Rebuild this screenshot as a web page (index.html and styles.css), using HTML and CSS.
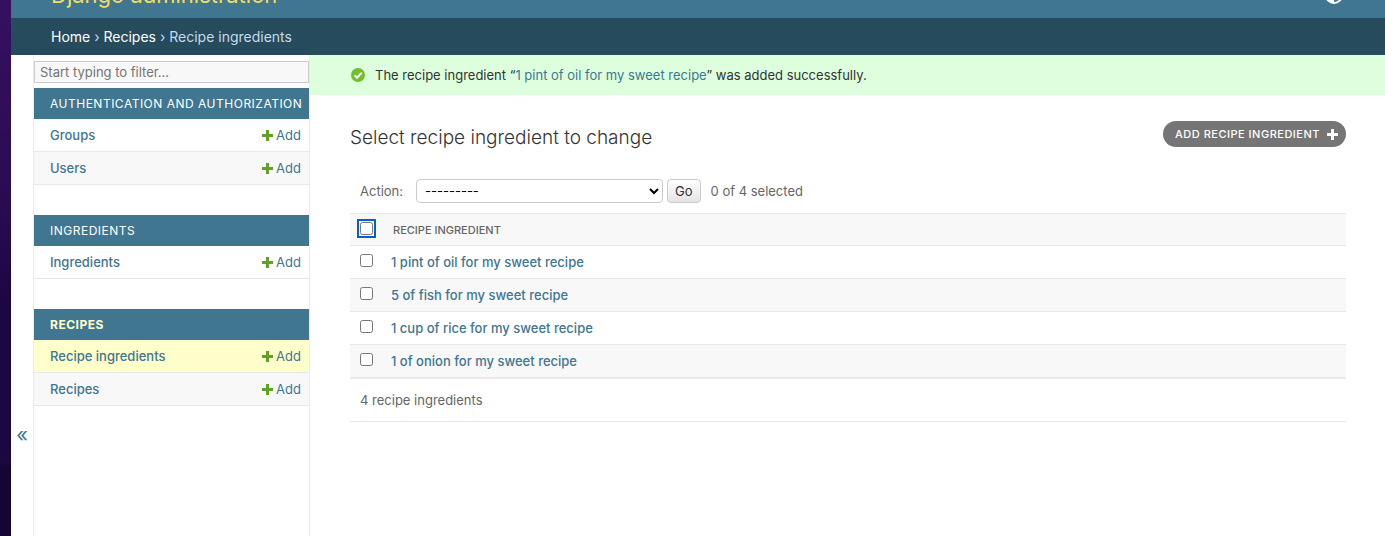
FILE: index.html
```html
<!DOCTYPE html>
<html lang="en">
<head>
<meta charset="utf-8">
<meta name="viewport" content="width=device-width, initial-scale=1">
<title>Select recipe ingredient to change | Django site admin</title>
<link rel="stylesheet" href="styles.css">
</head>
<body class="desktop">
<svg class="sprite" aria-hidden="true">
  <symbol id="plus" viewBox="0 0 11 11"><path d="M4 0h3v4h4v3H7v4H4V7H0V4h4z"/></symbol>
</svg>
<div class="window">
  <header class="header">
    <a class="site-name" href="#">Django administration</a>
    <button class="theme-toggle" type="button" aria-label="Toggle theme">
      <svg viewBox="0 0 20 20" width="20" height="20"><circle cx="10" cy="10" r="8" fill="none" stroke="#fff" stroke-width="2"/><path d="M10 2a8 8 0 0 0 0 16z" fill="#fff"/></svg>
    </button>
  </header>
  <nav class="breadcrumbs" aria-label="Breadcrumbs">
    <a href="#">Home</a> › <a href="#">Recipes</a> › Recipe ingredients
  </nav>
  <div class="main">
    <button class="sidebar-toggle" type="button" aria-label="Toggle navigation">«</button>
    <nav class="sidebar" aria-label="Sidebar">
      <input class="filter" type="search" placeholder="Start typing to filter…" aria-label="Filter navigation items">
      <section class="module">
        <h2 class="caption"><a href="#">Authentication and Authorization</a></h2>
        <div class="model"><a class="model-name" href="#">Groups</a><a class="add" href="#"><svg class="plus"><use href="#plus"/></svg>Add</a></div>
        <div class="model"><a class="model-name" href="#">Users</a><a class="add" href="#"><svg class="plus"><use href="#plus"/></svg>Add</a></div>
      </section>
      <section class="module">
        <h2 class="caption"><a href="#">Ingredients</a></h2>
        <div class="model"><a class="model-name" href="#">Ingredients</a><a class="add" href="#"><svg class="plus"><use href="#plus"/></svg>Add</a></div>
      </section>
      <section class="module">
        <h2 class="caption current"><a href="#">Recipes</a></h2>
        <div class="model current"><a class="model-name" href="#">Recipe ingredients</a><a class="add" href="#"><svg class="plus"><use href="#plus"/></svg>Add</a></div>
        <div class="model"><a class="model-name" href="#">Recipes</a><a class="add" href="#"><svg class="plus"><use href="#plus"/></svg>Add</a></div>
      </section>
    </nav>
    <main class="content">
      <div class="message" role="status">
        <svg class="tick" viewBox="0 0 14 14"><circle cx="7" cy="7" r="7" fill="#70bf2b"/><path d="M3.5 7.2l2.5 2.5 4.7-5" fill="none" stroke="#fff" stroke-width="2"/></svg>
        <span>The recipe ingredient “<a href="#">1 pint of oil for my sweet recipe</a>” was added successfully.</span>
      </div>
      <div class="page">
        <div class="title-row">
          <h1 class="title">Select recipe ingredient to change</h1>
          <a class="add-button" href="#">Add recipe ingredient<svg class="plus"><use href="#plus"/></svg></a>
        </div>
        <form class="changelist">
          <div class="actions">
            <label class="action-label" for="action">Action:</label>
            <select class="action-select" id="action"><option>---------</option><option>Delete selected recipe ingredients</option></select>
            <button class="go" type="button">Go</button>
            <span class="counter">0 of 4 selected</span>
          </div>
          <table class="results">
            <thead>
              <tr><th class="check"><input class="box focused" type="checkbox" aria-label="Select all"></th><th class="heading" scope="col">Recipe ingredient</th></tr>
            </thead>
            <tbody>
              <tr><td class="check"><input class="box" type="checkbox" aria-label="Select 1 pint of oil"></td><th class="name" scope="row"><a href="#">1 pint of oil for my sweet recipe</a></th></tr>
              <tr><td class="check"><input class="box" type="checkbox" aria-label="Select 5 of fish"></td><th class="name" scope="row"><a href="#">5 of fish for my sweet recipe</a></th></tr>
              <tr><td class="check"><input class="box" type="checkbox" aria-label="Select 1 cup of rice"></td><th class="name" scope="row"><a href="#">1 cup of rice for my sweet recipe</a></th></tr>
              <tr><td class="check"><input class="box" type="checkbox" aria-label="Select 1 of onion"></td><th class="name" scope="row"><a href="#">1 of onion for my sweet recipe</a></th></tr>
            </tbody>
          </table>
          <p class="paginator">4 recipe ingredients</p>
        </form>
      </div>
    </main>
  </div>
</div>
</body>
</html>
```
FILE: styles.css
```css
* { box-sizing: border-box; }

.desktop {
  margin: 0;
  min-height: 100vh;
  padding-left: 11px;
  display: flex;
  background: linear-gradient(#35105f 0, #2c0c55 180px, #1d0743 300px, #1d0743 460px, #140532 470px, #140532 100%);
  font-family: Inter, Roboto, "Liberation Sans", sans-serif;
  font-size: 13px;
  color: #333;
}
a { color: #417690; text-decoration: none; }
button { font-family: inherit; cursor: pointer; }
.sprite { position: absolute; width: 0; height: 0; }
.plus { width: 11px; height: 11px; fill: currentColor; flex: none; }

.window { flex: 1; min-width: 0; display: flex; flex-direction: column; background: #fff; }

.header {
  height: 18px;
  padding: 0 41px 0 40px;
  display: flex;
  align-items: flex-end;
  justify-content: space-between;
  overflow: hidden;
  background: #417690;
}
.site-name { padding-bottom: 9px; font-size: 22px; line-height: 28px; color: #f5dd5d; }
.theme-toggle { display: flex; margin-bottom: 13px; padding: 0; border: 0; background: none; }

.breadcrumbs { padding: 9px 40px 8px; font-size: 14px; line-height: 20px; background: #264b5d; color: #c4dce8; }
.breadcrumbs a { color: #fff; }

.main { flex: 1; display: flex; }
.sidebar-toggle {
  width: 22px;
  padding: 278px 0 0;
  border: 0;
  background: #fff;
  font-size: 20px;
  color: #417690;
}
.sidebar { width: 277px; flex: none; padding-top: 6px; border: solid #eaeaea; border-width: 0 1px; }
.filter {
  display: block;
  width: 100%;
  height: 22px;
  margin-bottom: 5px;
  padding: 0 5px;
  border: 1px solid #ccc;
  border-radius: 0;
  background: #f8f8f8;
  font: inherit;
  appearance: none;
}
.filter::placeholder { color: #757575; }

.module { margin-bottom: 30px; }
.caption {
  margin: 0;
  padding: 8px 0 8px 16px;
  background: #417690;
  font-size: 12px;
  font-weight: 400;
  line-height: 15px;
  letter-spacing: 0.5px;
  text-transform: uppercase;
  white-space: nowrap;
}
.caption a { color: #fff; }
.caption.current { font-weight: 700; }
.caption.current a { color: #ffc; }
.model {
  display: flex;
  justify-content: space-between;
  padding: 8px 8px 8px 16px;
  border-bottom: 1px solid #e8e8e8;
  line-height: 16px;
}
.model:nth-child(odd) { background: #f8f8f8; }
.model.current { background: #ffc; }
.model-name { font-weight: 500; }
.add { display: flex; align-items: center; gap: 3px; }
.add .plus { fill: #5fa225; }

.content { flex: 1; min-width: 0; }
.message { display: flex; align-items: center; gap: 10px; padding: 10px 41px; line-height: 20px; background: #dfd; }
.tick { width: 14px; height: 14px; flex: none; }
.page { padding: 26px 39px 40px 40px; }
.title-row { display: flex; justify-content: space-between; align-items: flex-start; }
.title { margin: 4px 0 0; font-size: 19px; font-weight: 300; line-height: 26px; }
.add-button {
  display: flex;
  align-items: center;
  gap: 7px;
  padding: 0 8px 0 12px;
  border-radius: 13px;
  background: #757575;
  color: #fff;
  font-size: 11px;
  font-weight: 500;
  line-height: 26px;
  letter-spacing: 0.5px;
  text-transform: uppercase;
}

.actions { display: flex; align-items: center; padding: 28px 10px 10px; line-height: 24px; color: #666; }
.action-label { margin-right: 13px; }
.action-select {
  width: 247px;
  height: 24px;
  margin-right: 4px;
  padding: 0 4px;
  border: 1px solid #ccc;
  border-radius: 4px;
  background: #fff;
  font: inherit;
  color: #000;
}
.go {
  height: 24px;
  margin-right: 10px;
  padding: 0 7px;
  border: 1px solid #ccc;
  border-radius: 4px;
  background: linear-gradient(#fff, #e4e4e4);
  font-size: 13px;
  color: #333;
}

.results { width: 100%; border-collapse: collapse; text-align: left; border-top: 1px solid #e8e8e8; }
.results td, .results th { height: 33px; padding: 0; border-bottom: 1px solid #e8e8e8; }
.results thead th { height: 32px; }
.results tbody tr:last-child > * { border-bottom: 2px solid #e8e8e8; }
.results thead, .results tbody tr:nth-child(even) { background: #f8f8f8; }
.results .check { width: 41px; padding: 8px 0 0 10px; vertical-align: top; }
.box { display: block; width: 13px; height: 13px; margin: 0; }
.focused { outline: 2px solid #0b5cc4; outline-offset: 1px; border-radius: 2px; }
.results .heading { padding-left: 2px; font-size: 11px; font-weight: 500; color: #666; text-transform: uppercase; }
.name { font-weight: 500; }
.paginator { margin: 0; padding: 10px; border-bottom: 1px solid #e8e8e8; line-height: 22px; color: #666; }
```
